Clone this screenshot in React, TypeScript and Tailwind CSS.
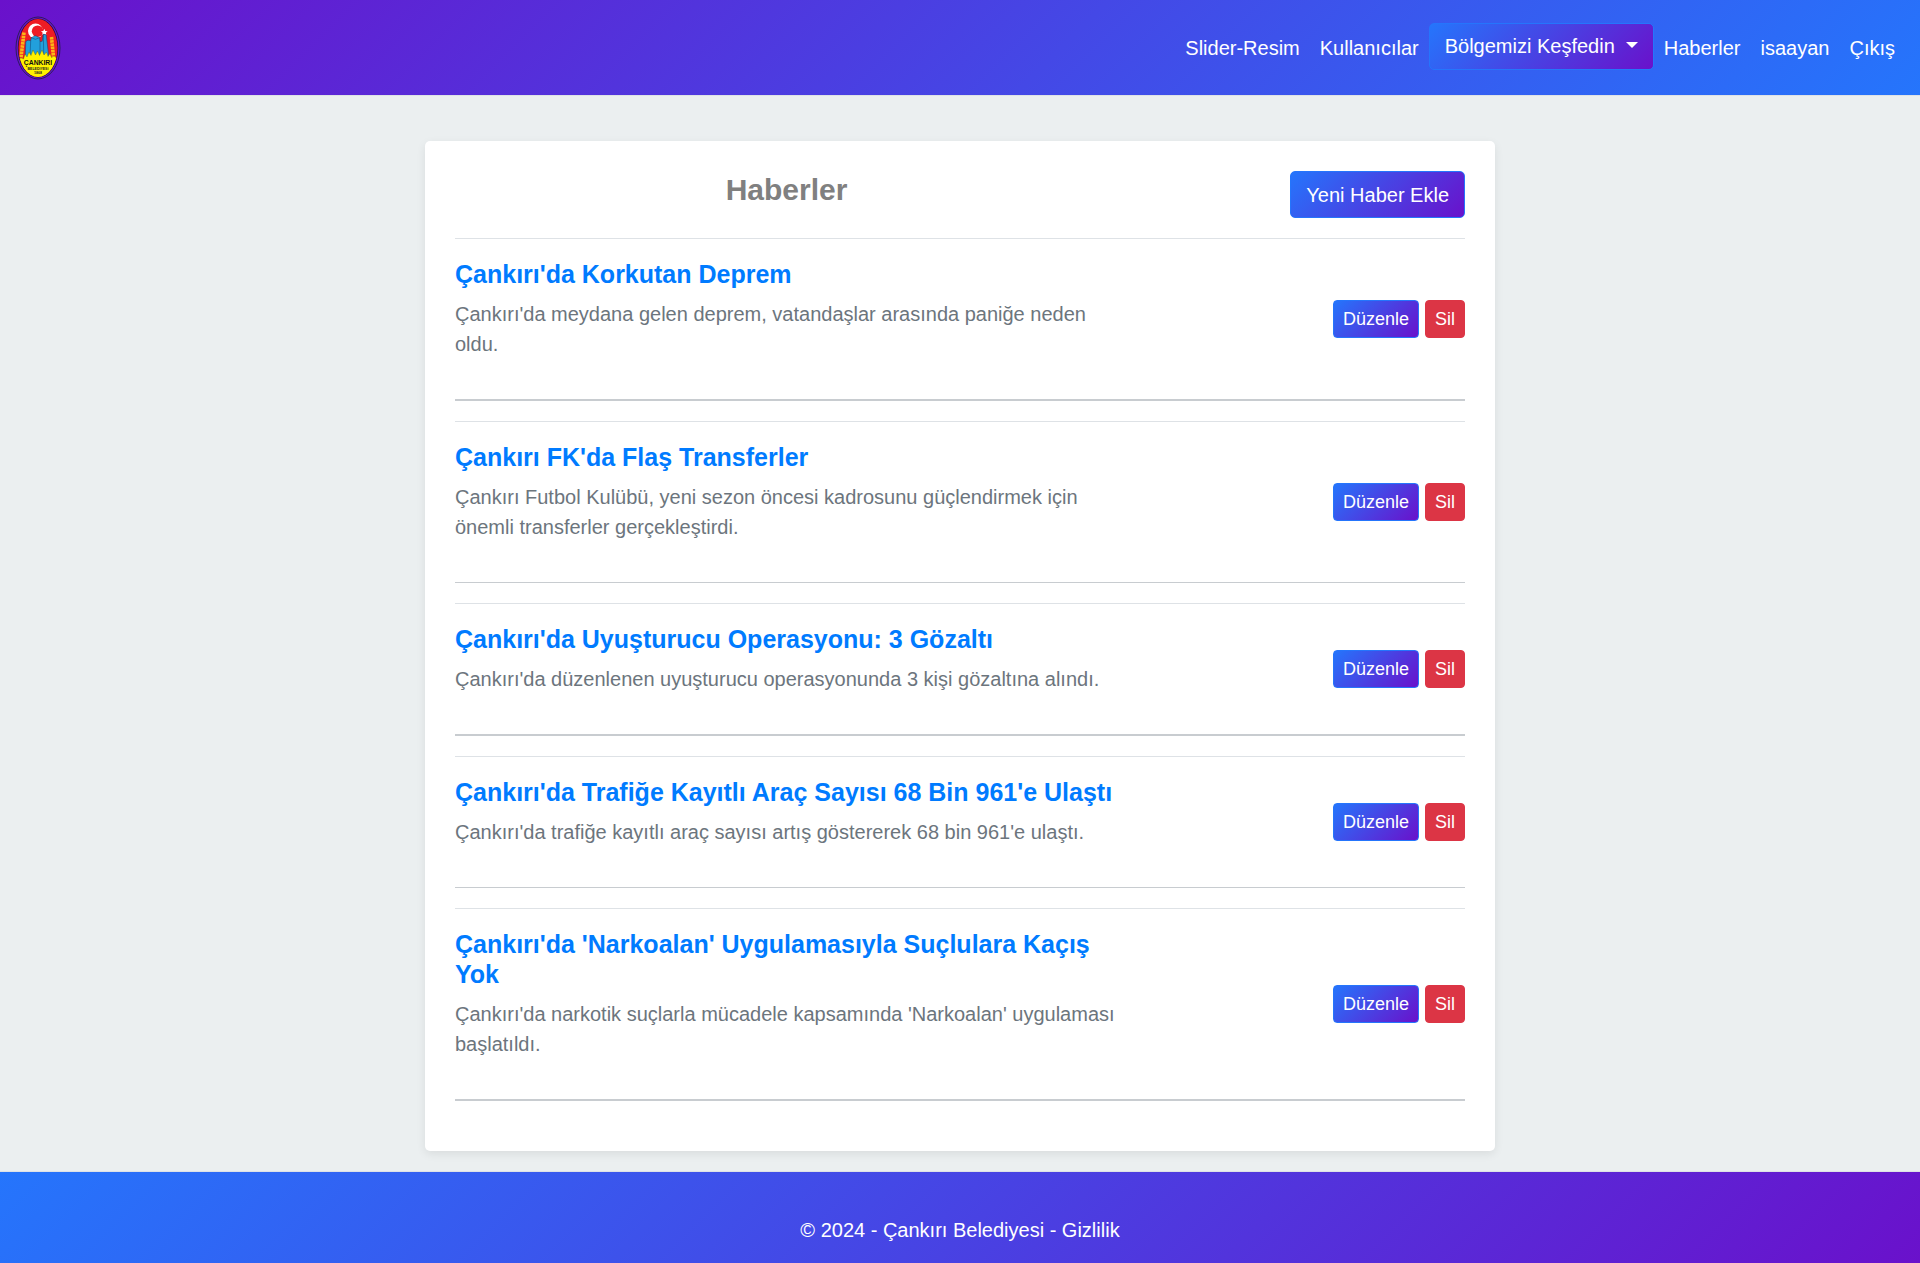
const news = [
  {
    title: "Çankırı'da Korkutan Deprem",
    summary: "Çankırı'da meydana gelen deprem, vatandaşlar arasında paniğe neden oldu.",
  },
  {
    title: "Çankırı FK'da Flaş Transferler",
    summary:
      "Çankırı Futbol Kulübü, yeni sezon öncesi kadrosunu güçlendirmek için önemli transferler gerçekleştirdi.",
  },
  {
    title: "Çankırı'da Uyuşturucu Operasyonu: 3 Gözaltı",
    summary: "Çankırı'da düzenlenen uyuşturucu operasyonunda 3 kişi gözaltına alındı.",
  },
  {
    title: "Çankırı'da Trafiğe Kayıtlı Araç Sayısı 68 Bin 961'e Ulaştı",
    summary: "Çankırı'da trafiğe kayıtlı araç sayısı artış göstererek 68 bin 961'e ulaştı.",
  },
  {
    title: "Çankırı'da 'Narkoalan' Uygulamasıyla Suçlulara Kaçış Yok",
    summary: "Çankırı'da narkotik suçlarla mücadele kapsamında 'Narkoalan' uygulaması başlatıldı.",
  },
];

function Logo() {
  return (
    <svg viewBox="0 0 46 64" className="h-16 w-[46px]" role="img" aria-label="Çankırı Belediyesi">
      <defs>
        <clipPath id="crest">
          <ellipse cx="23" cy="32" rx="19.5" ry="29" />
        </clipPath>
      </defs>
      <ellipse cx="23" cy="32" rx="22" ry="31" fill="none" stroke="#2f1a5e" strokeWidth="1" />
      <ellipse cx="23" cy="32" rx="20.2" ry="29.6" fill="#1c1233" />
      <g clipPath="url(#crest)">
        <rect width="46" height="64" fill="#ee1c24" />
        <circle cx="20.500" cy="15" r="7.500" fill="#fff" />
        <circle cx="22.600" cy="15.200" r="5.800" fill="#ee1c24" />
        <path d="M29.300 12.800l1 2.100 2.300.3-1.700 1.600.4 2.300-2-1.100-2 1.100.4-2.300-1.700-1.600 2.300-.3z" fill="#fff" />
        <path
          d="M10 46l.8-20.500 2.200-1.300 2.700.5.500-3 4.200-2 4.200 2 .4 4 2.200-.5 1-7 3 .6 3 25V46z"
          fill="#22a0dc"
          stroke="#14406e"
          strokeWidth=".5"
        />
        <path d="M15.700 24.700L15 40M16.200 21.700l4.200 1.600 4.200-1.600M25 25.700V40M28.300 18l.5 24" stroke="#14406e" strokeWidth=".5" fill="none" />
        <path d="M9 16.500L5.800 43" stroke="#fbb615" strokeWidth="3.600" strokeDasharray="2.600 .6" />
        <path d="M36.500 21l2.200 22" stroke="#fbb615" strokeWidth="3.600" strokeDasharray="2.600 .6" />
        <path
          d="M1 45l5-3 2.500 1 1.500-5 2 3 2-5 2 3.500 2-5.500 2.500 5 2-4 2 4.500 2.500-5.500 2 5 2.500-3 1.500 4.500 2-3 1.500 4 2.500-1.500 4 3v22H1z"
          fill="#fff200"
          stroke="#4a4200"
          strokeWidth=".3"
        />
      </g>
      <text x="23" y="49" textAnchor="middle" fontSize="6.800" fontWeight="700" fontFamily="Liberation Sans, sans-serif" fill="#111">
        ÇANKIRI
      </text>
      <text x="23" y="53.500" textAnchor="middle" fontSize="3.500" fontWeight="700" fontFamily="Liberation Sans, sans-serif" fill="#222">
        BELEDİYESİ
      </text>
      <text x="23" y="57.500" textAnchor="middle" fontSize="3.500" fontWeight="700" fontFamily="Liberation Sans, sans-serif" fill="#222">
        1868
      </text>
    </svg>
  );
}

function NavLink({ label }: { label: string }) {
  return (
    <li>
      <a href="#" className="block p-2.5">
        {label}
      </a>
    </li>
  );
}

export default function App() {
  return (
    <div className="flex min-h-screen flex-col bg-[#ebeff0] font-['Liberation_Sans',Arial,sans-serif] text-[20px] leading-[30px]">
      <header className="flex items-center justify-between border-b border-[#dee2e6] bg-[linear-gradient(135deg,#6a11cb_0%,#2575fc_100%)] px-[15px] text-white">
        <a href="#">
          <Logo />
        </a>
        <nav className="pt-[23px] pb-[22px]">
          <ul className="flex items-start">
            <NavLink label="Slider-Resim" />
            <NavLink label="Kullanıcılar" />
            <li>
              <button
                type="button"
                className="flex h-[47px] items-center rounded-[5px] border border-[#2575fc] bg-[linear-gradient(135deg,#2575fc_0%,#6a11cb_100%)] px-[15px] pb-0.5"
              >
                Bölgemizi Keşfedin
                <span className="mb-px ml-[11px] border-x-6 border-t-6 border-x-transparent border-t-white" />
              </button>
            </li>
            <NavLink label="Haberler" />
            <NavLink label="isaayan" />
            <NavLink label="Çıkış" />
          </ul>
        </nav>
      </header>

      <main className="grow px-5 pt-[45px] pb-5">
        <section className="mx-auto max-w-[1070px] rounded-[5px] bg-white p-[30px] shadow-[0_3px_10px_rgba(0,0,0,0.08)]">
          <div className="flex items-start justify-between pb-5">
            <h2 className="w-[663px] text-center text-[30px] leading-[38px] font-bold text-[#808080]">Haberler</h2>
            <a
              href="#"
              className="flex h-[47px] items-center rounded-[5px] border border-[#2575fc] bg-[linear-gradient(135deg,#2575fc_0%,#6a11cb_100%)] px-[15px] text-white"
            >
              Yeni Haber Ekle
            </a>
          </div>
          {news.map((item) => (
            <article
              key={item.title}
              className="mb-5 border-t border-t-[#dee2e6] border-b-[#c8ccd0] pt-5 pb-5 even:border-b-2 odd:border-b"
            >
              <div className="flex items-center justify-between">
                <div className="w-[663px] pb-5">
                  <h3 className="mb-2.5 text-[25px] leading-[30px] font-bold text-[#007bff]">
                    <a href="#">{item.title}</a>
                  </h3>
                  <p className="text-[#6c757d]">{item.summary}</p>
                </div>
                <div className="flex gap-1.5 text-[18px] leading-[26px] text-white">
                  <a
                    href="#"
                    className="rounded-[4px] border border-[#2575fc] bg-[linear-gradient(135deg,#2575fc_0%,#6a11cb_100%)] px-[9px] py-[5px]"
                  >
                    Düzenle
                  </a>
                  <button type="button" className="rounded-[4px] border border-[#dc3545] bg-[#dc3545] px-[9px] py-[5px]">
                    Sil
                  </button>
                </div>
              </div>
            </article>
          ))}
        </section>
      </main>

      <footer className="border-t border-[#dee2e6] bg-[linear-gradient(135deg,#2575fc_0%,#6a11cb_100%)] px-5 pt-[43px] pb-[18px] text-center text-white">
        © 2024 - Çankırı Belediyesi - <a href="#">Gizlilik</a>
      </footer>
    </div>
  );
}
